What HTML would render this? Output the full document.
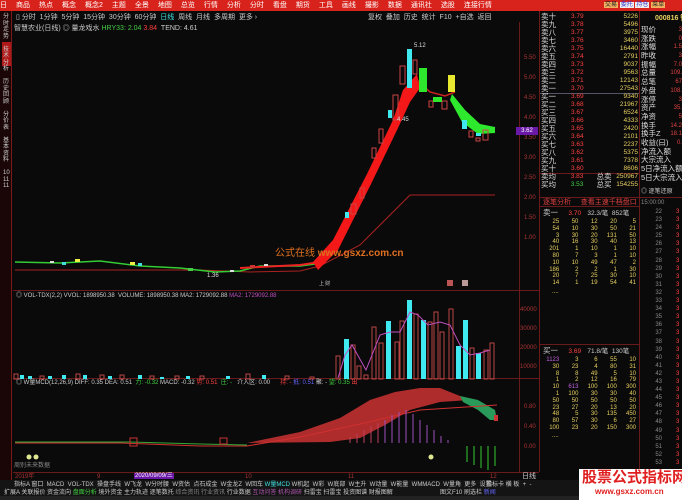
<!DOCTYPE html>
<html><head><meta charset="utf-8"><style>
*{margin:0;padding:0;box-sizing:border-box}
body{width:682px;height:500px;background:#0a0a0a;overflow:hidden;position:relative;font-family:"Liberation Sans","Noto Sans CJK SC",sans-serif;font-size:7px;color:#ccc}
.a{position:absolute;white-space:nowrap;line-height:1}
.top{position:absolute;left:0;top:0;width:682px;height:11px;background:#d8231c}
.top span{display:inline-block;color:#fff;font-size:7px;margin-left:9px;line-height:11px}
.ob{position:absolute;left:541px;top:13px;width:97px}
.ob div{height:8px;line-height:8px;display:flex;overflow:visible}
.ob b{font-weight:normal;width:30px;font-size:7.5px;color:#ddd}
.ob i{font-style:normal;width:26px;font-size:6.5px;color:#ff4040}
.ob u{text-decoration:none;flex:1;text-align:right;font-size:6.5px;color:#e8d060}
.fr{position:absolute;left:641px;top:26px;width:41px}
.fr div{height:8.7px;line-height:8.7px;font-size:7.5px;color:#ddd;display:flex;justify-content:space-between;overflow:visible;white-space:nowrap}
.fr span{font-size:6px;color:#e04040}
.tk{position:absolute;left:540px;width:96px}
.tk div{height:6.8px;line-height:6.8px;font-size:6px;color:#e8d060;display:flex}
.tk span{flex:1;text-align:right}
.r{text-align:right}
.rd{color:#ff4040}.g{color:#40d040}.w{color:#ddd}.gr{color:#888}
</style></head><body>
<div class="top"><span style="margin-left:0">日</span><span>商品</span><span>热点</span><span>概念</span><span>概念2</span><span>主题</span><span>全景</span><span>地图</span><span>总览</span><span>行情</span><span>分析</span><span>分时</span><span>看盘</span><span>期货</span><span>工具</span><span>画线</span><span>撮影</span><span>数据</span><span>通讯社</span><span>选股</span><span>连接行情</span></div>
<div class="a" style="left:604px;top:2px;font-size:6px;color:#222"><span style="background:#f0b060;padding:0 1px">交易</span> <span style="background:#eee;color:#33c;padding:0 1px">委托</span> <span style="background:#eee;color:#33c;padding:0 1px">持仓</span> <span style="background:#f0b060;padding:0 1px">菜单</span></div>
<div style="position:absolute;left:0;top:11px;width:12px;height:489px;background:#1a0606;border-right:1px solid #7a1a1a"></div>
<div style="position:absolute;left:2px;top:42px;width:9px;height:24px;background:#b01818"></div>
<div class="a" style="left:3px;top:14px;font-size:6px;color:#ccc;white-space:normal;width:7px;line-height:6.5px">分时走势<br><br>技术分析<br><br>历史回顾<br><br>分价表<br><br>基本资料<br><br>10<br>11<br>11</div>
<div class="a" style="left:16px;top:14px;color:#ccc;font-size:7px">▯ 分时 &nbsp;1分钟 &nbsp;5分钟 &nbsp;15分钟 &nbsp;30分钟 &nbsp;60分钟 &nbsp;<span style="color:#40e0e0">日线</span> &nbsp;周线 &nbsp;月线 &nbsp;多周期 &nbsp;更多 ›</div>
<div class="a" style="left:368px;top:14px;font-size:7px">复权 &nbsp;叠加 &nbsp;历史 &nbsp;统计 &nbsp;F10 &nbsp;+自选 &nbsp;返回</div>
<div class="a" style="left:14px;top:25px;font-size:7px">智慧农业(日线) ◎ 量龙戏水 <span style="color:#4c4">HRY33: 2.04</span> <span class="rd">3.84</span> &nbsp;TEND: 4.61</div>
<div style="position:absolute;left:13px;top:22px;width:507px;height:450px;border-right:1px solid #6a1a1a"></div>
<div style="position:absolute;left:13px;top:290px;width:526px;border-top:1px solid #6a1a1a"></div>
<div style="position:absolute;left:13px;top:378px;width:526px;border-top:1px solid #6a1a1a"></div>
<div style="position:absolute;left:13px;top:472px;width:526px;border-top:1px solid #6a1a1a"></div>
<div style="position:absolute;left:539px;top:11px;height:461px;border-left:1px solid #6a1a1a"></div>
<div style="position:absolute;left:639px;top:11px;height:461px;border-left:1px solid #6a1a1a"></div>
<div style="position:absolute;left:540px;top:93px;width:99px;border-top:1px solid #556"></div>
<div style="position:absolute;left:540px;top:173px;width:99px;border-top:1px solid #6a1a1a"></div>
<div style="position:absolute;left:540px;top:197px;width:142px;border-top:1px solid #6a1a1a"></div>
<div style="position:absolute;left:540px;top:206px;width:99px;border-top:1px solid #6a1a1a"></div>
<div style="position:absolute;left:540px;top:344px;width:99px;border-top:1px solid #6a1a1a"></div>
<div class="a" style="left:524px;top:48px;color:#a33;font-size:6px;line-height:20px">5.50<br>5.00<br>4.50<br>4.00<br>3.50<br>3.00<br>2.50<br>2.00<br>1.50<br>1.00</div>
<div style="position:absolute;left:516px;top:127px;width:22px;height:8px;background:#6a18a8;color:#fff;font-size:6px;line-height:8px;text-align:center">3.62</div>
<div class="a" style="left:520px;top:301px;color:#a33;font-size:6px;line-height:19px">40000<br>30000<br>20000<br>10000</div>
<div class="a" style="left:524px;top:397px;color:#a33;font-size:6px;line-height:20px">0.80<br>0.40<br>0.00</div>
<svg style="position:absolute;left:0;top:0" width="682" height="500">
<polyline points="15,270 200,270 250,272 300,271 320,266 360,245 390,215 410,195 495,195" fill="none" stroke="#a22"/>
<polyline points="15,262 60,263 100,261 140,266 180,268 215,272 240,271 260,266 300,266 315,264" fill="none" stroke="#3c3" stroke-width="1.5"/>
<polyline points="240,268 300,265 320,262" fill="none" stroke="#e22" stroke-width="2"/>
<g fill="#ddd"><rect x="50" y="261" width="4" height="2"/><rect x="75" y="259" width="5" height="3" fill="#ee4"/><rect x="62" y="262" width="4" height="3" fill="#4dd"/><rect x="130" y="262" width="5" height="3" fill="#ee4"/><rect x="138" y="263" width="4" height="3" fill="#4dd"/><rect x="188" y="268" width="5" height="3" fill="#4c4"/><rect x="230" y="270" width="4" height="2"/><rect x="250" y="265" width="5" height="3" fill="#c33"/><rect x="264" y="264" width="4" height="2"/></g>
<polygon points="313,262 333,240 367,174 393,120 403,90 417,74 420,88 410,102 398,128 372,182 338,250 318,270" fill="#f41818"/>
<polygon points="452,94 465,110 480,124 495,127 495,133 478,134 462,122 450,100" fill="#2ee82e"/>
<polyline points="417,80 430,92 445,96 455,92" fill="none" stroke="#c22" stroke-width="1.5"/>
<g stroke="#c44" fill="none"><rect x="400" y="66" width="5" height="18"/><rect x="413" y="60" width="4" height="14"/><rect x="393" y="95" width="5" height="25"/><rect x="379" y="129" width="4" height="14"/><rect x="372" y="148" width="4" height="10"/><rect x="360" y="188" width="4" height="10"/><rect x="351" y="204" width="5" height="10"/><rect x="429" y="101" width="4" height="6"/><rect x="442" y="101" width="5" height="8"/><rect x="469" y="131" width="4" height="6"/><rect x="483" y="130" width="5" height="10"/><rect x="476" y="138" width="4" height="3"/></g>
<rect x="407" y="49" width="5" height="39" fill="#40e8f0"/>
<rect x="419" y="68" width="8" height="24" fill="#2ee82e"/>
<rect x="448" y="75" width="7" height="17" fill="#e8e830"/>
<rect x="433" y="97" width="9" height="5" fill="#2ee82e"/>
<rect x="462" y="120" width="5" height="9" fill="#40e8f0"/>
<rect x="388" y="110" width="4" height="8" fill="#40e8f0"/>
<rect x="345" y="212" width="4" height="6" fill="#40e8f0"/>
<rect x="476" y="133" width="5" height="3" fill="#40e8f0"/>
<text x="414" y="47" fill="#ddd" font-size="6" font-family="Liberation Sans">5.12</text>
<text x="397" y="121" fill="#ddd" font-size="6" font-family="Liberation Sans">4.45</text>
<text x="207" y="277" fill="#ddd" font-size="6" font-family="Liberation Sans">1.36</text>
<text x="275" y="256" fill="#e07020" font-size="10" font-family="Liberation Sans,Noto Sans CJK SC,sans-serif">公式在线 <tspan font-weight="bold">www.gsxz.com.cn</tspan></text>
<text x="319" y="285" fill="#ccc" font-size="5" font-family="Noto Sans CJK SC">上 财</text>
<rect x="447" y="280" width="6" height="6" fill="#b55"/><rect x="462" y="280" width="6" height="6" fill="#b99"/>
<g fill="none" stroke="#b44"><rect x="336" y="356" width="4" height="23"/><rect x="351" y="345" width="4" height="34"/><rect x="357" y="366" width="4" height="13"/><rect x="364" y="375" width="4" height="4"/><rect x="372" y="327" width="4" height="52"/><rect x="379" y="343" width="4" height="36"/><rect x="395" y="342" width="4" height="37"/><rect x="400" y="321" width="4" height="58"/><rect x="414" y="314" width="4" height="65"/><rect x="428" y="322" width="4" height="57"/><rect x="434" y="312" width="4" height="67"/><rect x="440" y="332" width="4" height="47"/><rect x="449" y="309" width="4" height="70"/><rect x="470" y="348" width="4" height="31"/><rect x="484" y="350" width="4" height="29"/><rect x="490" y="343" width="4" height="36"/></g>
<g fill="#40e8f0"><rect x="344" y="339" width="5" height="40"/><rect x="386" y="321" width="5" height="58"/><rect x="407" y="300" width="5" height="79"/><rect x="421" y="320" width="5" height="59"/><rect x="456" y="346" width="5" height="33"/><rect x="463" y="320" width="5" height="59"/><rect x="476" y="353" width="5" height="26"/></g>
<polyline points="338,378 345,355 352,345 366,370 380,335 390,332 400,332 410,312 418,315 428,325 440,322 450,325 460,345 470,355 480,353 490,350" fill="none" stroke="#c050c0"/>
<g fill="#40e8f0"><rect x="20" y="375" width="4" height="4"/><rect x="28" y="376" width="4" height="3"/><rect x="48" y="376" width="4" height="3"/><rect x="62" y="375" width="4" height="4"/><rect x="83" y="375" width="4" height="4"/><rect x="108" y="376" width="4" height="3"/><rect x="138" y="375" width="4" height="4"/><rect x="160" y="377" width="4" height="2"/><rect x="186" y="376" width="4" height="3"/><rect x="226" y="376" width="4" height="3"/><rect x="262" y="375" width="4" height="4"/></g>
<g fill="none" stroke="#b44"><rect x="14" y="374" width="4" height="5"/><rect x="40" y="376" width="4" height="3"/><rect x="76" y="374" width="4" height="5"/><rect x="100" y="375" width="4" height="4"/><rect x="120" y="375" width="4" height="4"/><rect x="150" y="376" width="4" height="3"/><rect x="175" y="376" width="4" height="3"/><rect x="200" y="376" width="4" height="3"/><rect x="246" y="374" width="4" height="5"/><rect x="285" y="376" width="4" height="3"/><rect x="310" y="377" width="4" height="2"/></g>
<polygon points="247,443 300,432 340,418 370,400 395,392 420,388 440,388 460,396 470,400 440,402 410,410 385,425 360,438 330,442" fill="#c03030" opacity="0.9"/>
<polygon points="460,396 478,400 495,410 497,420 490,420 478,410 463,402" fill="#2a9a5a"/>
<polyline points="15,443 120,443 200,446 247,446 300,437 360,424 420,410 497,405" fill="none" stroke="#d03030"/>
<polyline points="15,442 130,442 200,444 247,445" fill="none" stroke="#3a3"/>
<g stroke="#a050c0"><line x1="385" y1="443" x2="385" y2="420"/><line x1="392" y1="443" x2="392" y2="415"/><line x1="399" y1="443" x2="399" y2="412"/><line x1="406" y1="443" x2="406" y2="410"/><line x1="413" y1="443" x2="413" y2="414"/><line x1="420" y1="443" x2="420" y2="420"/><line x1="427" y1="443" x2="427" y2="425"/><line x1="434" y1="443" x2="434" y2="430"/><line x1="441" y1="443" x2="441" y2="436"/><line x1="448" y1="443" x2="448" y2="440"/></g>
<g stroke="#c04060"><line x1="350" y1="443" x2="350" y2="437"/><line x1="357" y1="443" x2="357" y2="434"/><line x1="364" y1="443" x2="364" y2="430"/><line x1="371" y1="443" x2="371" y2="426"/><line x1="378" y1="443" x2="378" y2="423"/></g>
<g stroke="#3c3"><line x1="467" y1="446" x2="467" y2="462"/><line x1="474" y1="446" x2="474" y2="465"/><line x1="481" y1="446" x2="481" y2="468"/><line x1="488" y1="446" x2="488" y2="470"/><line x1="495" y1="446" x2="495" y2="466"/></g>
<rect x="130" y="438" width="7" height="8" fill="none" stroke="#c33"/><rect x="220" y="438" width="7" height="6" fill="none" stroke="#c33"/><rect x="494" y="415" width="4" height="6" fill="#c33"/>
<circle cx="29" cy="457" r="2.5" fill="#dfe890"/><circle cx="36" cy="457" r="2.5" fill="#dfe890"/><circle cx="431" cy="457" r="2.5" fill="#dfe890"/>
</svg>
<div class="a" style="left:16px;top:293px;font-size:6px">◎ VOL-TDX(2,2) VVOL: 1898950.38 &nbsp;VOLUME: 1898950.38 MA2: 1729092.88 <span style="color:#c050c0">MA2: 1729092.88</span></div>
<div class="a" style="left:16px;top:380px;font-size:6px">◎ W量MCD(12,26,9) DIFF: 0.35 DEA: 0.51 &nbsp;<span class="g">力: -0.32</span> MACD: -0.32 <span class="rd">势: 0.51</span> &nbsp;<span class="g">庄: -</span> &nbsp;&nbsp;介入区: 0.00 &nbsp;&nbsp;&nbsp;&nbsp;&nbsp;<span class="rd">持: -</span> <span style="color:#66f">抵: 0.51</span> 聚: - <span class="g">望: 0.35</span> <span class="rd">出</span></div>
<div class="a" style="left:14px;top:463px;font-size:6px;color:#888">周别未来数据</div>
<div class="a" style="left:15px;top:474px;font-size:6px;color:#a33">2019年</div><div class="a" style="left:97px;top:474px;font-size:6px;color:#a33">9</div>
<div class="a" style="left:134px;top:473px;font-size:6px;background:#6a18a8;color:#fff;padding:0 1px">2020/09/09/三</div>
<div class="a" style="left:245px;top:474px;font-size:6px;color:#a33">10</div><div class="a" style="left:348px;top:474px;font-size:6px;color:#a33">11</div><div class="a" style="left:490px;top:474px;font-size:6px;color:#a33">12</div>
<div class="a" style="left:522px;top:473px;font-size:7px">日线</div>
<div style="position:absolute;left:0;top:480px;width:682px;height:20px;background:#141414"></div>
<div class="a" style="left:14px;top:482px;font-size:6px;color:#ccc">指标A 窗口 &nbsp;MACD &nbsp;VOL-TDX &nbsp;操盘手线 &nbsp;W飞龙 &nbsp;W分时腰 &nbsp;W资估 &nbsp;点石成金 &nbsp;W金龙Z &nbsp;W回车 <span style="color:#40e0e0">W量MCD</span> W机起 &nbsp;W彩 &nbsp;W底部 &nbsp;W主升 &nbsp;W动量 &nbsp;W能量 &nbsp;WMMACD &nbsp;W量角 &nbsp;更多 &nbsp;设置</div>
<div class="a" style="left:486px;top:482px;font-size:6px">指标卡 横 板 &nbsp;+ &nbsp;-</div>
<div class="a" style="left:4px;top:490px;font-size:6px;color:#ccc">扩展A 关联报价 资金流向 <span class="g">盘面分析</span> 境外资金 主力轨迹 逐笔数托 <span style="color:#888">综合资讯 行业资讯</span> 行业数据 <span style="color:#a5a">互动问答 机构调研</span> 扫雷宝 扫雷宝 投资图谱 财报图解</div>
<div class="a" style="left:440px;top:490px;font-size:6px;color:#ccc">图文F10 刷选栏 <span style="color:#66f">新闻</span></div>
<div style="position:absolute;left:0;top:496px;width:682px;height:4px;background:#222"></div>
<div style="position:absolute;left:579px;top:469px;width:103px;height:31px;background:#fff"></div>
<div class="a" style="left:582px;top:470px;font-size:15px;font-weight:bold;color:#e02020">股票公式指标网</div>
<div class="a" style="left:595px;top:488px;font-size:8px;font-weight:bold;color:#e02020">www.gsxz.com.cn</div>
<div class="ob">
<div><b>卖十</b><i>3.79</i><u>5226</u></div>
<div><b>卖九</b><i>3.78</i><u>5496</u></div>
<div><b>卖八</b><i>3.77</i><u>3975</u></div>
<div><b>卖七</b><i>3.76</i><u>3460</u></div>
<div><b>卖六</b><i>3.75</i><u>16440</u></div>
<div><b>卖五</b><i>3.74</i><u>2791</u></div>
<div><b>卖四</b><i>3.73</i><u>9037</u></div>
<div><b>卖三</b><i>3.72</i><u>9563</u></div>
<div><b>卖二</b><i>3.71</i><u>12143</u></div>
<div><b>卖一</b><i>3.70</i><u>27543</u></div>
<div><b>买一</b><i>3.69</i><u>9340</u></div>
<div><b>买二</b><i>3.68</i><u>21967</u></div>
<div><b>买三</b><i>3.67</i><u>6524</u></div>
<div><b>买四</b><i>3.66</i><u>4333</u></div>
<div><b>买五</b><i>3.65</i><u>2420</u></div>
<div><b>买六</b><i>3.64</i><u>2101</u></div>
<div><b>买七</b><i>3.63</i><u>2237</u></div>
<div><b>买八</b><i>3.62</i><u>5375</u></div>
<div><b>买九</b><i>3.61</i><u>7378</u></div>
<div><b>买十</b><i>3.60</i><u>8606</u></div>
<div><b>卖均</b><i>3.83</i><b style="width:20px">总卖</b><u>250967</u></div>
<div><b>买均</b><i style="color:#40d040">3.53</i><b style="width:20px">总买</b><u>154255</u></div>
</div>
<div class="a" style="left:543px;top:199px;font-size:7px;color:#e04040">逐笔分析 &nbsp;&nbsp;&nbsp;&nbsp;查看主速千档盘口</div>
<div class="a" style="left:543px;top:209px;font-size:7.5px">卖一 &nbsp;&nbsp;&nbsp;&nbsp;<span class="rd" style="font-size:6.5px">3.70</span> &nbsp;&nbsp;<span style="font-size:6.5px">32.3/笔 &nbsp;852笔</span></div>
<div class="tk" style="top:219px">
<div><span>25</span><span>50</span><span>12</span><span>20</span><span>5</span></div>
<div><span>54</span><span>10</span><span>30</span><span>50</span><span>21</span></div>
<div><span>3</span><span>30</span><span>20</span><span>131</span><span>50</span></div>
<div><span>40</span><span>16</span><span>30</span><span>40</span><span>13</span></div>
<div><span>201</span><span>1</span><span>10</span><span>1</span><span>10</span></div>
<div><span>80</span><span>7</span><span>3</span><span>1</span><span>10</span></div>
<div><span>10</span><span>10</span><span>49</span><span>47</span><span>2</span></div>
<div><span>186</span><span>2</span><span>2</span><span>1</span><span>30</span></div>
<div><span>20</span><span>7</span><span>25</span><span>30</span><span>10</span></div>
<div><span>14</span><span>1</span><span>19</span><span>54</span><span>41</span></div>
</div>
<div class="a" style="left:552px;top:289px;font-size:6px;color:#e8d060">....</div>
<div class="a" style="left:543px;top:347px;font-size:7.5px">买一 &nbsp;&nbsp;&nbsp;&nbsp;<span class="rd" style="font-size:6.5px">3.69</span> &nbsp;&nbsp;<span style="font-size:6.5px">71.8/笔 &nbsp;130笔</span></div>
<div class="tk" style="top:357px">
<div><span style="color:#c060e0">1123</span><span>3</span><span>6</span><span>55</span><span>10</span></div>
<div><span>30</span><span>23</span><span>4</span><span>80</span><span>31</span></div>
<div><span>8</span><span>8</span><span>49</span><span>5</span><span>10</span></div>
<div><span>1</span><span>2</span><span>12</span><span>16</span><span>79</span></div>
<div><span>10</span><span style="color:#c060e0">613</span><span>100</span><span>100</span><span>300</span></div>
<div><span>1</span><span>100</span><span>30</span><span>30</span><span>40</span></div>
<div><span>50</span><span>50</span><span>50</span><span>50</span><span>50</span></div>
<div><span>23</span><span>27</span><span>20</span><span>13</span><span>20</span></div>
<div><span>48</span><span>5</span><span>30</span><span>135</span><span>450</span></div>
<div><span>80</span><span>57</span><span>30</span><span>6</span><span>27</span></div>
<div><span>100</span><span>23</span><span>20</span><span>150</span><span>300</span></div>
</div>
<div class="a" style="left:552px;top:433px;font-size:6px;color:#e8d060">....</div>
<div class="a" style="left:655px;top:15px;font-size:7px;color:#e8d060;font-weight:bold">000816 智</div>
<div class="fr">
<div>现价<span>3</span></div><div>涨跌<span>0</span></div><div>涨幅<span>1.5</span></div><div>昨收<span class="w">3</span></div><div>振幅<span class="w">7.0</span></div><div>总量<span class="w">109.</span></div><div>总笔<span class="w">67</span></div><div>外盘<span>108.</span></div><div>涨停<span>3</span></div><div>资产<span class="w">35.</span></div><div>净资<span class="w">5</span></div><div>换手<span class="w">14.2</span></div><div>换手Z<span class="w">18.1</span></div><div>收益(曰)<span class="w">0.</span></div><div>净流入额</div><div>大宗流入</div><div>5日净流入额</div><div>5日大宗流入</div>
</div>
<div class="a" style="left:641px;top:189px;font-size:6px">◎ 逐笔还原</div>
<div class="a gr" style="left:641px;top:200px;font-size:6px">15:00:00</div>
<div class="a gr r" style="left:640px;top:208px;width:22px;font-size:6px;line-height:8.1px">22<br>23<br>24<br>25<br>26<br>27<br>28<br>29<br>30<br>31<br>32<br>33<br>34<br>35<br>36<br>37<br>38<br>39<br>40<br>41<br>42<br>43<br>44<br>45<br>46<br>47<br>48<br>49<br>50<br>51<br>52<br>53</div>
<div class="a rd" style="left:676px;top:208px;font-size:6px;line-height:8.1px">3<br>3<br>3<br>3<br>3<br>3<br>3<br>3<br>3<br>3<br>3<br>3<br>3<br>3<br>3<br>3<br>3<br>3<br>3<br>3<br>3<br>3<br>3<br>3<br>3<br>3<br>3<br>3<br>3<br>3<br>3<br>3</div>
</body></html>
